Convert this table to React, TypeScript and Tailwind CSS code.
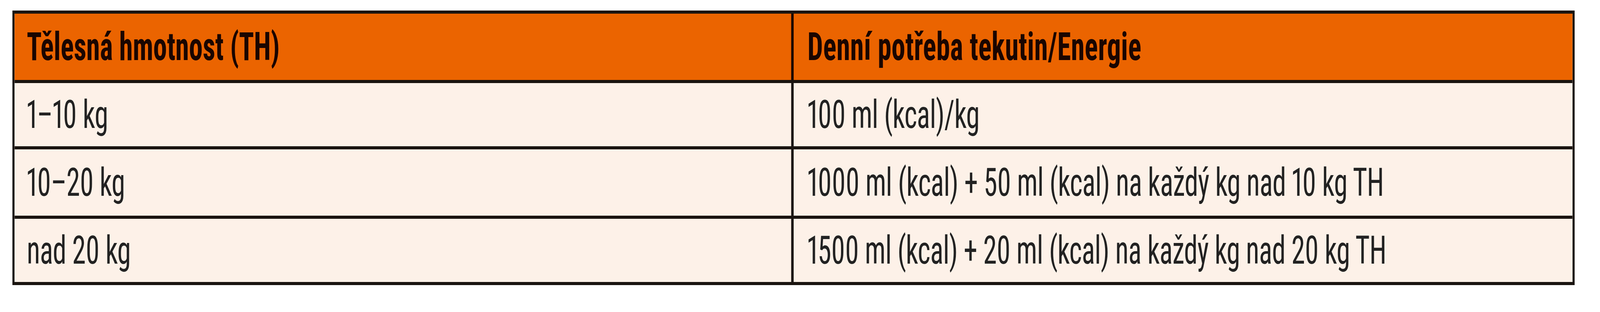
import { useEffect, useState } from "react";

// designed at 5804px wide; squeezed horizontally when the window is narrower
const DESIGN_W = 5804;

const rows: [string, string, string][] = [
  ["1–10 kg", "100 ml (kcal)/kg", "h-[170px]"],
  ["10–20 kg", "1000 ml (kcal) + 50 ml (kcal) na každý kg nad 10 kg TH", "h-[178px]"],
  ["nad 20 kg", "1500 ml (kcal) + 20 ml (kcal) na každý kg nad 20 kg TH", "h-[170px]"],
];

export default function App() {
  const [k, setK] = useState(1);

  useEffect(() => {
    const fit = () => setK(Math.min(1, window.innerWidth / DESIGN_W));
    fit();
    window.addEventListener("resize", fit);
    return () => window.removeEventListener("resize", fit);
  }, []);

  return (
    <div className="w-screen h-[800px] overflow-hidden bg-white">
      <div
        className="w-[5804px] h-[800px] origin-top-left pt-[27px] pl-[45px] font-['Roboto',sans-serif] font-stretch-condensed proportional-nums"
        style={{ transform: `scaleX(${k})` }}
      >
        <div className="w-[5667px] border-[8px] border-[#1a1410]">
          {/* Header */}
          <div className="grid grid-cols-[2826px_1fr] h-[170px] bg-[#eb6400] text-[#1a0500] font-bold text-[100px] leading-none">
            <div className="flex items-center pl-[44px] border-r-[9px] border-[#1a0500] whitespace-nowrap">
              Tělesná hmotnost (TH)
            </div>
            <div className="flex items-center pl-[50px] whitespace-nowrap tracking-[0.5px]">
              Denní potřeba tekutin/Energie
            </div>
          </div>

          {/* Body rows */}
          {rows.map(([weight, need, h]) => (
            <div
              key={weight}
              className={`grid grid-cols-[2826px_1fr] ${h} border-t-[8px] border-[#1a1410] bg-[#fdf1e8] text-[#222] text-[100px] leading-none tracking-[-1px]`}
            >
              <div className="flex items-center pl-[44px] border-r-[9px] border-[#1a1410] whitespace-nowrap">
                {weight}
              </div>
              <div className="flex items-center pl-[50px] whitespace-nowrap">{need}</div>
            </div>
          ))}
        </div>
      </div>
    </div>
  );
}
